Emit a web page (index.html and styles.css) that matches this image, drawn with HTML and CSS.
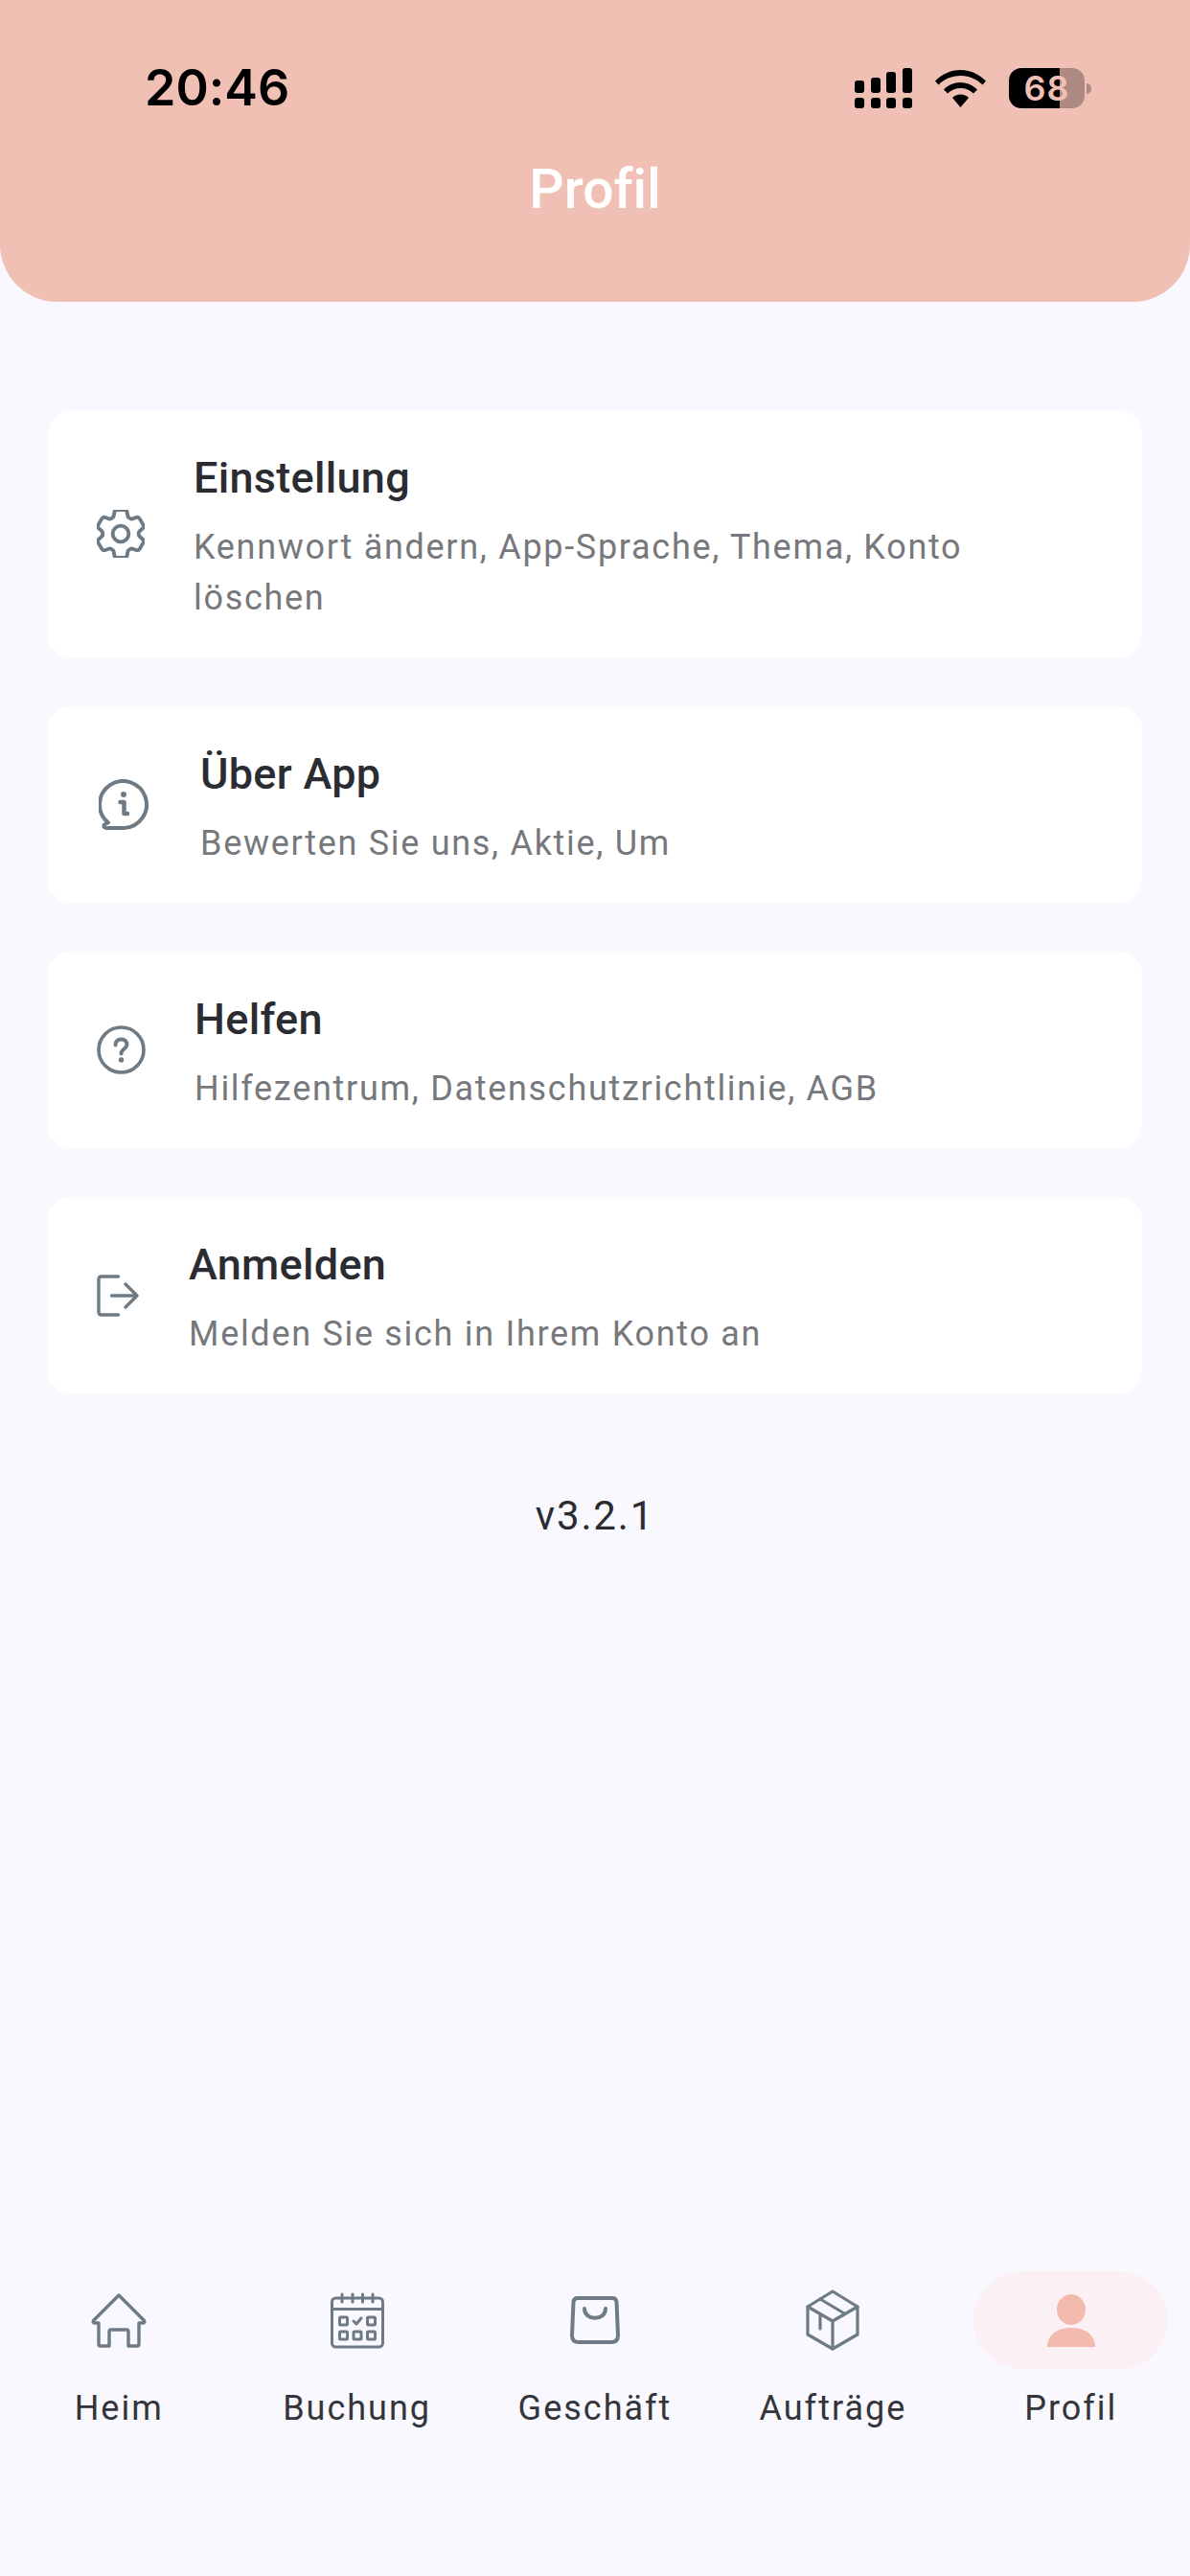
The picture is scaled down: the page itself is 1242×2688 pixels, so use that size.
FILE: index.html
```html
<!DOCTYPE html>
<html lang="de">
<head>
<meta charset="utf-8">
<title>Profil</title>
<link rel="stylesheet" href="styles.css">
</head>
<body>
<div class="page">
  <header class="header">
    <div class="status">
      <span class="time">20:46</span>
      <div class="status-icons">
        <svg class="signal" viewBox="0 0 60 42" fill="#000">
          <rect x="0" y="13" width="10" height="13" rx="3"/><rect x="17" y="10" width="10" height="16" rx="3"/><rect x="33" y="4" width="10" height="22" rx="3"/><rect x="50" y="0" width="10" height="26" rx="3"/>
          <rect x="0" y="31" width="10" height="11" rx="3"/><rect x="17" y="31" width="10" height="11" rx="3"/><rect x="33" y="31" width="10" height="11" rx="3"/><rect x="50" y="31" width="10" height="11" rx="3"/>
        </svg>
        <svg class="wifi" viewBox="0 0 53 39" fill="#000">
          <path d="M0 11.5C7 4.500 16 0 26.500 0S46 4.500 53 11.500L49.500 15.500C43.500 9.500 35.500 6 26.500 6S9.500 9.500 3.500 15.500Z"/>
          <path d="M9 20.500C13.500 15.800 19.800 13 26.500 13S39.500 15.800 44 20.500L40 24.500C36.500 21 31.800 19 26.500 19S16.500 21 13 24.500Z"/>
          <path d="M18 29C20.200 26.800 23.200 25.500 26.500 25.500S32.800 26.800 35 29L26.500 39Z"/>
        </svg>
        <div class="battery">
          <div class="battery-body"><span class="battery-level">68</span></div>
          <span class="battery-tip"></span>
        </div>
      </div>
    </div>
    <h1 class="title">Profil</h1>
  </header>

  <main class="list">
    <section class="card">
      <svg class="icon icon-gear" viewBox="3 3 18 18" fill="none" stroke="#6e7b85" stroke-width="1.4" stroke-linejoin="round">
        <path d="M9.594 3.94c.09-.542.56-.94 1.11-.94h2.593c.55 0 1.02.398 1.11.94l.213 1.281c.063.374.313.686.645.87.074.04.147.083.22.127.325.196.72.257 1.075.124l1.217-.456a1.125 1.125 0 0 1 1.37.49l1.296 2.247a1.125 1.125 0 0 1-.26 1.431l-1.003.827c-.293.241-.438.613-.43.992a7.723 7.723 0 0 1 0 .255c-.008.378.137.75.43.991l1.004.827c.424.35.534.955.26 1.43l-1.298 2.247a1.125 1.125 0 0 1-1.369.491l-1.217-.456c-.355-.133-.75-.072-1.076.124a6.47 6.47 0 0 1-.22.128c-.331.183-.581.495-.644.869l-.213 1.281c-.09.543-.56.94-1.11.94h-2.594c-.55 0-1.019-.398-1.11-.94l-.213-1.281c-.062-.374-.312-.686-.644-.87a6.52 6.52 0 0 1-.22-.127c-.325-.196-.72-.257-1.076-.124l-1.217.456a1.125 1.125 0 0 1-1.369-.49l-1.297-2.247a1.125 1.125 0 0 1 .26-1.431l1.004-.827c.292-.24.437-.613.43-.991a6.932 6.932 0 0 1 0-.255c.007-.38-.138-.751-.43-.992l-1.004-.827a1.125 1.125 0 0 1-.26-1.43l1.297-2.247a1.125 1.125 0 0 1 1.37-.491l1.216.456c.356.133.751.072 1.076-.124.072-.044.146-.086.22-.128.332-.183.582-.495.644-.869l.214-1.28Z"/>
        <circle cx="12" cy="12" r="3"/>
      </svg>
      <div class="text">
        <h2 class="card-title">Einstellung</h2>
        <p class="card-sub">Kennwort ändern, App-Sprache, Thema, Konto löschen</p>
      </div>
    </section>
    <section class="card">
      <svg class="icon icon-info" viewBox="0 0 53 53" fill="none" stroke="#6e7b85" stroke-width="4" stroke-linecap="round" stroke-linejoin="round">
        <path d="M26.500 51H9Q5 51 5.500 48Q6 47 10 45.500A24.500 24.500 0 1 1 26.500 51Z"/>
        <circle cx="26" cy="16" r="3" fill="#6e7b85" stroke="none"/>
        <path d="M22.500 24H26.500V36H30" stroke-width="4.500"/>
      </svg>
      <div class="text">
        <h2 class="card-title">Über App</h2>
        <p class="card-sub">Bewerten Sie uns, Aktie, Um</p>
      </div>
    </section>
    <section class="card">
      <svg class="icon icon-help" viewBox="0 0 51 51" fill="none" stroke="#6e7b85" stroke-width="3.600" stroke-linecap="round">
        <circle cx="25.500" cy="25.500" r="23.500"/>
        <path d="M19.500 20.500C19.500 16.500 22 14.500 25.500 14.500S31.500 16.800 31.500 20C31.500 24 25.500 24.500 25.500 29.500" stroke-width="4"/>
        <circle cx="25.500" cy="36" r="2.700" fill="#6e7b85" stroke="none"/>
      </svg>
      <div class="text">
        <h2 class="card-title">Helfen</h2>
        <p class="card-sub">Hilfezentrum, Datenschutzrichtlinie, AGB</p>
      </div>
    </section>
    <section class="card">
      <svg class="icon icon-exit" viewBox="0 0 44 44" fill="none" stroke="#6e7b85" stroke-width="3.400" stroke-linecap="round" stroke-linejoin="round">
        <path d="M22.500 2H4.500A2.500 2.500 0 0 0 2 4.500V39.500A2.500 2.500 0 0 0 4.500 42H22.500"/>
        <path d="M15.500 22H42M30 10L42 22L30 34"/>
      </svg>
      <div class="text">
        <h2 class="card-title">Anmelden</h2>
        <p class="card-sub">Melden Sie sich in Ihrem Konto an</p>
      </div>
    </section>
    <p class="version">v3.2.1</p>
  </main>

  <nav class="nav">
    <div class="nav-item">
      <div class="nav-icon">
        <svg class="nav-svg" viewBox="0 0 64 64" fill="none" stroke="#6e7b85" stroke-width="3.400" stroke-linejoin="round" stroke-linecap="round">
          <path d="M32 6L58.500 32.500Q59.500 34.500 57.500 35H53V57Q53 59 51 59H42V44Q42 42 40 42H24Q22 42 22 44V59H13Q11 59 11 57V35H6.500Q4.500 34.500 5.500 32.500Z"/>
        </svg>
      </div>
      <span class="nav-label">Heim</span>
    </div>
    <div class="nav-item">
      <div class="nav-icon">
        <svg class="nav-svg" viewBox="0 0 64 64" fill="none" stroke="#6e7b85" stroke-width="3" stroke-linejoin="round" stroke-linecap="round">
          <rect x="5.500" y="9" width="53" height="51" rx="4"/>
          <path d="M5.500 20.500H58.500M16 5V13M27 5V13M37.500 5V13M48 5V13"/>
          <rect x="13.500" y="29" width="8" height="8" rx="1"/><rect x="42.500" y="29" width="8" height="8" rx="1"/>
          <rect x="13.500" y="44" width="8" height="8" rx="1"/><rect x="28" y="44" width="8" height="8" rx="1"/><rect x="42.500" y="44" width="8" height="8" rx="1"/>
          <path d="M28 33L31 36L36 30"/>
        </svg>
      </div>
      <span class="nav-label">Buchung</span>
    </div>
    <div class="nav-item">
      <div class="nav-icon">
        <svg class="nav-svg" viewBox="0 0 64 64" fill="none" stroke="#6e7b85" stroke-width="4" stroke-linejoin="round" stroke-linecap="round">
          <path d="M14 9H50Q54 9 54.500 13L56 48Q56 55 49 55H15Q8 55 8 48L9.500 13Q10 9 14 9Z"/>
          <path d="M21 20C21 33 43 33 43 20"/>
        </svg>
      </div>
      <span class="nav-label">Geschäft</span>
    </div>
    <div class="nav-item">
      <div class="nav-icon">
        <svg class="nav-svg" viewBox="0 0 64 64" fill="none" stroke="#6e7b85" stroke-width="3.200" stroke-linejoin="round" stroke-linecap="round">
          <path d="M32 2L58 18V47L32 62L6 47V18Z"/>
          <path d="M6 18L32 33L58 18M32 33V62M19 10L45 25.500M19 26V41"/>
        </svg>
      </div>
      <span class="nav-label">Aufträge</span>
    </div>
    <div class="nav-item">
      <div class="nav-icon nav-icon-active">
        <svg class="nav-svg" viewBox="0 0 64 64" fill="#f2bbad">
          <ellipse cx="32" cy="21" rx="15" ry="16"/>
          <path d="M7 60C7 47 18 40 32 40S57 47 57 60Z"/>
        </svg>
      </div>
      <span class="nav-label">Profil</span>
    </div>
  </nav>
</div>
</body>
</html>
```
FILE: styles.css
```css
* { box-sizing: border-box; margin: 0; padding: 0; }
html, body { background: #f9f8fe; }
body { font-family: Roboto, "Noto Sans", sans-serif; font-variant-ligatures: none; }
.page { width: 1242px; height: 2688px; display: flex; flex-direction: column; overflow: hidden; }

.header { height: 315px; background: #f1c0b5; border-radius: 0 0 60px 60px; display: flex; flex-direction: column; }
.status { display: flex; justify-content: space-between; align-items: center; padding: 69px 103px 0 151px; height: 115px; }
.time { font-family: Inter, "Liberation Sans", sans-serif; font-weight: 600; font-size: 52px; line-height: 50px; color: #000; }
.status-icons { display: flex; align-items: center; gap: 24px; }
.signal { width: 60px; height: 42px; }
.wifi { width: 53px; height: 39px; }
.battery { display: flex; align-items: center; gap: 2px; }
.battery-body { width: 79px; height: 42px; border-radius: 13px; background: linear-gradient(90deg, #000 67%, #ad8a82 67%); display: flex; align-items: center; justify-content: center; }
.battery-level { font-family: Inter, "Liberation Sans", sans-serif; font-weight: 600; font-size: 36px; line-height: 42px; color: #f1c0b5; letter-spacing: 1px; }
.battery-tip { width: 5px; height: 11px; background: #ad8a82; border-radius: 0 5px 5px 0; }
.title { margin-top: 51px; text-align: center; color: #fff; font-weight: 500; font-size: 57px; line-height: 64px; }

.list { padding: 113px 50px 0; display: flex; flex-direction: column; gap: 51px; }
.card { background: #fff; border-radius: 24px; padding: 41px 0 35px 51px; display: flex; align-items: center; }
.icon { flex: none; margin-bottom: 6px; }
.icon-gear { width: 50px; height: 50px; margin-right: 51px; }
.icon-info { width: 53px; height: 53px; margin-left: 2px; margin-right: 53px; }
.icon-help { width: 51px; height: 51px; margin-right: 51px; }
.icon-exit { width: 44px; height: 44px; margin-right: 52px; }
.text { max-width: 850px; display: flex; flex-direction: column; gap: 16px; }
.card-title { font-weight: 500; font-size: 45px; line-height: 60px; letter-spacing: 0.3px; color: #2a2c31; }
.card-sub { font-weight: 400; font-size: 36px; line-height: 53px; letter-spacing: 1.7px; color: #77787c; }
.version { margin-top: 52px; text-align: center; font-size: 42px; font-weight: 400; line-height: 50px; color: #2a2c31; letter-spacing: 1.85px; }

.nav { margin-top: auto; display: grid; grid-template-columns: repeat(5, 1fr); padding-bottom: 150px; }
.nav-item { display: flex; flex-direction: column; align-items: center; gap: 16px; }
.nav-icon { width: 203px; height: 102px; border-radius: 51px; display: flex; align-items: center; justify-content: center; }
.nav-icon-active { background: #fbf0f3; }
.nav-svg { width: 64px; height: 64px; }
.nav-label { font-size: 36px; font-weight: 400; line-height: 50px; letter-spacing: 2px; color: #33353a; }
```
